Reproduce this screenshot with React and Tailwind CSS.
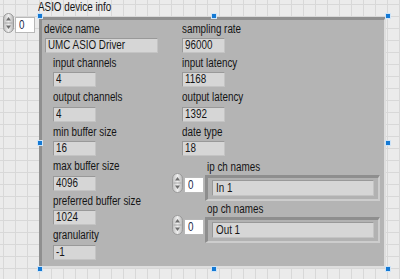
import React from "react";

const FONT = "font-['Liberation_Sans',Arial,sans-serif]";

function T({ children }) {
  return <span className="inline-block origin-left scale-x-[0.82]">{children}</span>;
}

function Label({ children, className = "" }) {
  return (
    <div className={`h-[14px] leading-[14px] text-[12px] text-[#141414] whitespace-nowrap ${className}`}>
      <T>{children}</T>
    </div>
  );
}

function Box({ children, className = "" }) {
  return (
    <div
      className={`h-[15px] border border-t-[#999999] border-l-[#999999] border-r-[#c4c4c4] border-b-[#c4c4c4] bg-[#d6d6d6] pl-[2px] leading-[13px] text-[12px] text-[#161616] whitespace-nowrap overflow-hidden ${className}`}
    >
      <T>{children}</T>
    </div>
  );
}

function Item({ label, value }) {
  return (
    <div className="h-[34.6px] flex flex-col">
      <Label>{label}</Label>
      <Box className="mt-[2.5px] w-[43px]">{value}</Box>
    </div>
  );
}

function Spinner() {
  return (
    <svg width="11" height="20" viewBox="0 0 11 20" className="block">
      <defs>
        <linearGradient id="spg" x1="0" x2="1" y1="0" y2="0">
          <stop offset="0" stopColor="#bdbdbd" />
          <stop offset="0.5" stopColor="#efefef" />
          <stop offset="1" stopColor="#b5b5b5" />
        </linearGradient>
      </defs>
      <rect x="0.5" y="0.5" width="10" height="19" rx="5" ry="5" fill="url(#spg)" stroke="#9a9a9a" />
      <line x1="1.5" y1="10" x2="9.5" y2="10" stroke="#a8a8a8" strokeWidth="1" />
      <path d="M5.5 4 L8 7.5 L3 7.5 Z" fill="#6e6e6e" />
      <path d="M5.5 16 L8 12.5 L3 12.5 Z" fill="#6e6e6e" />
    </svg>
  );
}

function IndexControl({ className = "" }) {
  return (
    <div className={`flex items-start ${className}`}>
      <Spinner />
      <div className="ml-[1px] mt-[4px] w-[20px] h-[16px] bg-white border border-[#b8b8b8] pl-[3px] leading-[14px] text-[12px] text-[#1a2a4a]">
        <T>0</T>
      </div>
    </div>
  );
}

function ArrayBlock({ label, value, className = "" }) {
  return (
    <div className={`flex items-start ${className}`}>
      <IndexControl className="mt-[13px]" />
      <div className="ml-[1px] flex flex-col">
        <Label className="ml-[2px]">{label}</Label>
        <div className="mt-[1px] w-[175px] h-[26px] border-t-[3px] border-l-[3px] border-r-[2px] border-b-[2px] border-t-[#8e8e8e] border-l-[#8e8e8e] border-r-[#cdcdcd] border-b-[#cdcdcd] bg-[#b2b2b2] pt-[2px] pl-[4px]">
          <Box className="w-[162px] h-[16px] leading-[14px] pl-[3px]">{value}</Box>
        </div>
      </div>
    </div>
  );
}

function Handle({ x, y }) {
  return (
    <div
      className="absolute w-[6px] h-[6px] bg-[#1479d4] border border-[#cfe4f7]"
      style={{ left: x - 3, top: y - 3 }}
    />
  );
}

export default function App() {
  return (
    <div
      className={`relative w-[400px] h-[279px] overflow-hidden bg-[#ebebeb] bg-[linear-gradient(to_right,#d8d8d8_1px,transparent_1px),linear-gradient(to_bottom,#d8d8d8_1px,transparent_1px)] bg-size-[12px_12px] bg-position-[3px_4px] ${FONT}`}
    >
      <div className="flex items-start">
        <IndexControl className="ml-[3px] mt-[13px]" />
        <div className="ml-[3px] flex flex-col">
          <Label>ASIO device info</Label>
          <div className="ml-[1px] mt-[3px] w-[347px] h-[251px] border-t-[3px] border-l-[3px] border-r-[2px] border-b-[2px] border-t-[#8f8f8f] border-l-[#8f8f8f] border-r-[#dedede] border-b-[#dedede] bg-[#b4b4b4] flex">
            <div className="w-[130px] flex flex-col pt-[2px]">
              <Label className="ml-[2px]">device name</Label>
              <Box className="ml-[3px] mt-[2px] w-[113px]">UMC ASIO Driver</Box>
              <div className="ml-[11px] mt-[2.5px] flex flex-col">
                <Item label="input channels" value="4" />
                <Item label="output channels" value="4" />
                <Item label="min buffer size" value="16" />
                <Item label="max buffer size" value="4096" />
                <Item label="preferred buffer size" value="1024" />
                <Item label="granularity" value="-1" />
              </div>
            </div>
            <div className="flex flex-col pt-[2px]">
              <div className="ml-[10px] flex flex-col">
                <Label>sampling rate</Label>
                <Box className="mt-[2px] w-[43px]">96000</Box>
                <div className="mt-[2.5px] flex flex-col">
                  <Item label="input latency" value="1168" />
                  <Item label="output latency" value="1392" />
                  <Item label="date type" value="18" />
                </div>
              </div>
              <ArrayBlock label="ip ch names" value="In 1" className="mt-[0.7px]" />
              <ArrayBlock label="op ch names" value="Out 1" className="mt-[1px]" />
            </div>
          </div>
        </div>
      </div>
      <Handle x={40} y={16} />
      <Handle x={214} y={16} />
      <Handle x={388} y={16} />
      <Handle x={40} y={143} />
      <Handle x={388} y={143} />
      <Handle x={40} y={269} />
      <Handle x={214} y={269} />
      <Handle x={388} y={269} />
    </div>
  );
}
